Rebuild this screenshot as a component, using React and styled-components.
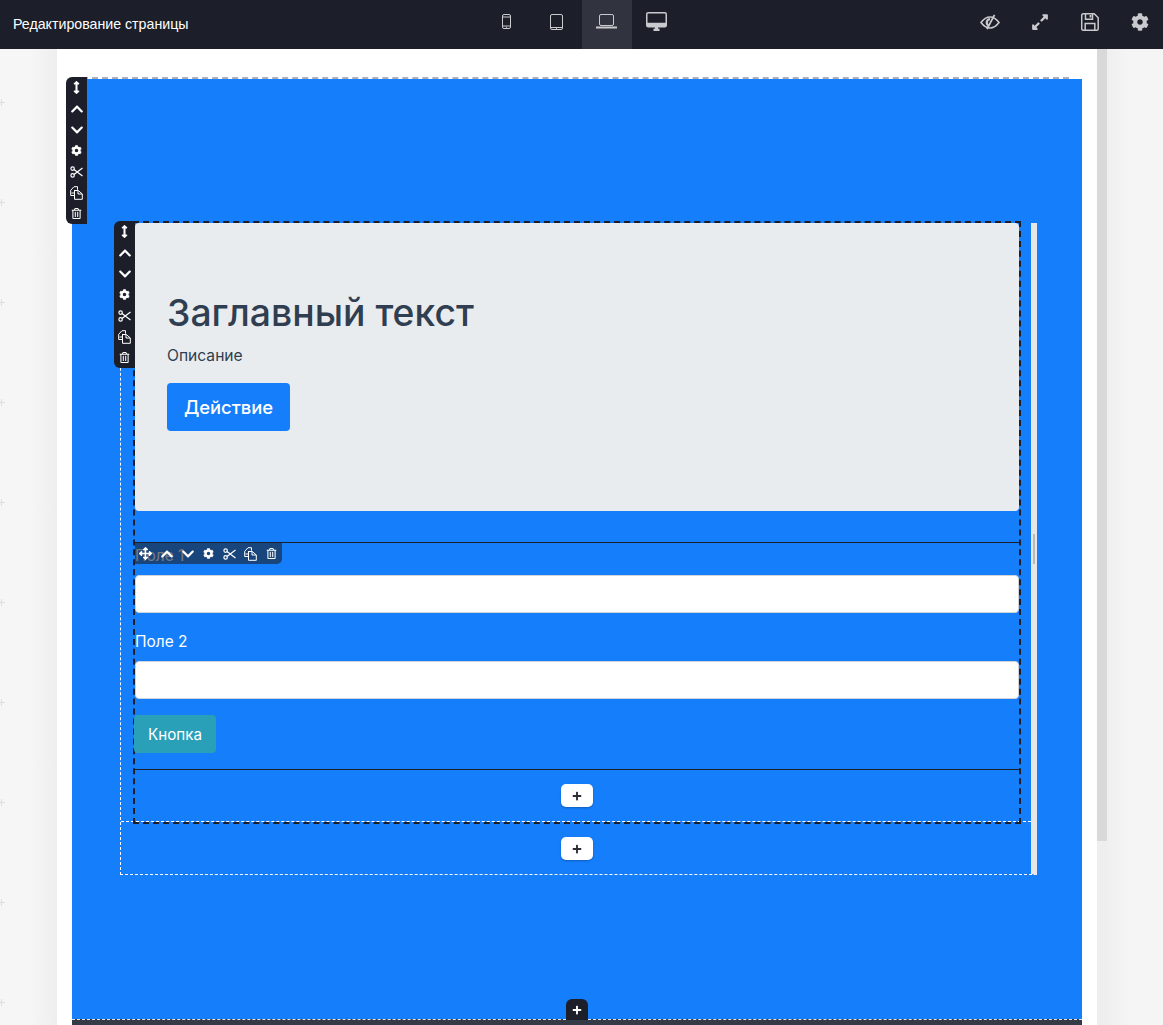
import React from 'react'
import styled, { createGlobalStyle } from 'styled-components'
import {
  FaArrowsAltV,
  FaArrowsAlt,
  FaChevronUp,
  FaChevronDown,
  FaCog,
  FaRegTrashAlt,
  FaExpandAlt,
  FaPlus
} from 'react-icons/fa'

const GlobalStyle = createGlobalStyle`
  * { box-sizing: border-box; }
  html, body { margin: 0; padding: 0; height: 100%; overflow: hidden; }
  body { font-family: Inter, "Liberation Sans", sans-serif; background: #f5f5f5; }
`

const PhoneIcon = () => (
  <svg width='9' height='15' viewBox='0 0 9 15' fill='none' stroke='currentColor'>
    <rect x='.5' y='.5' width='8' height='14' rx='1.5' />
    <path d='M1 3h7M1 12h7' />
    <circle cx='4.5' cy='13.2' r='.6' fill='currentColor' stroke='none' />
  </svg>
)

const TabletIcon = () => (
  <svg width='13' height='16' viewBox='0 0 13 16' fill='none' stroke='currentColor'>
    <rect x='.5' y='.5' width='12' height='15' rx='1.5' />
    <path d='M1 13.5h11' />
    <circle cx='6.5' cy='14.5' r='.6' fill='currentColor' stroke='none' />
  </svg>
)

const LaptopIcon = () => (
  <svg width='21' height='15' viewBox='0 0 21 15' fill='none' stroke='currentColor'>
    <rect x='3.5' y='.5' width='14' height='11' rx='1.5' />
    <path d='M.5 13.5h20' strokeWidth='2' strokeLinecap='round' />
  </svg>
)

const DesktopIcon = () => (
  <svg width='21' height='19' viewBox='0 0 21 19' fill='none' stroke='currentColor'>
    <rect x='.75' y='.75' width='19.5' height='14' rx='1.5' strokeWidth='1.5' />
    <path d='M1 12.5h19' strokeWidth='3.5' />
    <path d='M7.5 17.8h6' strokeWidth='2.4' />
    <path d='M9 15h3v2h-3z' fill='currentColor' stroke='none' />
  </svg>
)

const EyeSlashIcon = () => (
  <svg width='20' height='16' viewBox='0 0 20 16' fill='none' stroke='currentColor' strokeWidth='1.6'>
    <path d='M1 8.5C4 4.5 7 3 10 3s6 1.5 9 5.5c-3 4-6 5.500-9 5.500S4 12.500 1 8.500Z' />
    <path d='M10 5.200a3.300 3.300 0 0 0-1.500 6.200' strokeWidth='2.200' />
    <path d='M14.500 .8 7 15.200' strokeWidth='1.800' />
  </svg>
)

const SaveIcon = () => (
  <svg width='18' height='18' viewBox='0 0 18 18' fill='none' stroke='currentColor' strokeWidth='1.500'>
    <path d='M2.200 .8h11l4 4v10.900a1.500 1.500 0 0 1-1.500 1.500H2.200a1.500 1.500 0 0 1-1.500-1.500V2.300A1.500 1.500 0 0 1 2.200 .8Z' />
    <path d='M4.500 1v5.200h7V1M4.200 17v-6.500h9.600V17' />
    <path d='M9.500 2v2.500' strokeWidth='1.800' />
  </svg>
)

const ScissorsIcon = () => (
  <svg width='13' height='12' viewBox='0 0 13 12' fill='none' stroke='currentColor' strokeWidth='1.200'>
    <circle cx='2.600' cy='2.600' r='1.700' />
    <circle cx='2.600' cy='9.400' r='1.700' />
    <path d='M4 3.500 12.500 10M4 8.500 12.500 2' />
  </svg>
)

const CopyIcon = () => (
  <svg width='13' height='14' viewBox='0 0 13 14' fill='none' stroke='currentColor' strokeWidth='1'>
    <path d='M4.500 9.500H.7V4.300L4 .7h3.500v3' />
    <path d='M4.500 4v3h-3' />
    <path d='M4.500 4.500h3.800l4 3.500v5.300H4.500Z' />
    <path d='M8 4.500v3.500h4.300' />
  </svg>
)

const sideMarks = [0, 1, 2, 3, 4, 5, 6, 7, 8, 9]

const SectionTools = ({ move, className }) => (
  <ToolBar className={className} $horizontal={move}>
    <ToolButton>{move ? <FaArrowsAlt size={13} /> : <FaArrowsAltV size={13} />}</ToolButton>
    <ToolButton><FaChevronUp size={14} /></ToolButton>
    <ToolButton><FaChevronDown size={14} /></ToolButton>
    <ToolButton><FaCog size={11} /></ToolButton>
    <ToolButton><ScissorsIcon /></ToolButton>
    <ToolButton><CopyIcon /></ToolButton>
    <ToolButton><FaRegTrashAlt size={11} /></ToolButton>
  </ToolBar>
)

const App = () => (
  <Screen>
    <GlobalStyle />
    <TopBar>
      <PageTitle>Редактирование страницы</PageTitle>
      <DeviceGroup>
        <BarButton><PhoneIcon /></BarButton>
        <BarButton><TabletIcon /></BarButton>
        <BarButton $active><LaptopIcon /></BarButton>
        <BarButton><DesktopIcon /></BarButton>
      </DeviceGroup>
      <ActionGroup>
        <BarButton><EyeSlashIcon /></BarButton>
        <BarButton><FaExpandAlt size={18} /></BarButton>
        <BarButton><SaveIcon /></BarButton>
        <BarButton><FaCog size={18} /></BarButton>
      </ActionGroup>
    </TopBar>
    <Workspace>
      <LeftGutter>
        {sideMarks.map((mark) => <PlusMark key={mark} />)}
      </LeftGutter>
      <PageFrame>
        <BlueSection>
          <SectionToolbar />
          <OuterRow>
            <InnerRow>
              <ColumnToolbar />
              <Column>
                <Hero>
                  <HeroTitle>Заглавный текст</HeroTitle>
                  <HeroText>Описание</HeroText>
                  <HeroButton>Действие</HeroButton>
                </Hero>
                <FormBlock>
                  <FormToolbar move />
                  <FieldLabel>Поле 1</FieldLabel>
                  <FieldInput />
                  <FieldLabel>Поле 2</FieldLabel>
                  <FieldInput />
                  <SubmitButton>Кнопка</SubmitButton>
                </FormBlock>
                <AddRow $top={14}>
                  <AddButton><FaPlus size={10} /></AddButton>
                </AddRow>
              </Column>
            </InnerRow>
            <AddRow $top={15} $shift={2}>
              <AddButton><FaPlus size={10} /></AddButton>
            </AddRow>
            <ResizeHandle />
          </OuterRow>
          <AddTab><FaPlus size={10} /></AddTab>
        </BlueSection>
        <DarkFooter />
      </PageFrame>
      <Scrollbar />
      <RightGutter />
    </Workspace>
  </Screen>
)

export default App

const Screen = styled.div`
  width: 1163px;
  height: 1025px;
  overflow: hidden;
  display: flex;
  flex-direction: column;
`

const TopBar = styled.header`
  height: 49px;
  flex: none;
  display: grid;
  grid-template-columns: 482px 200px 1fr;
  background: #1c1f2a;
  color: #c9cacd;
`

const PageTitle = styled.div`
  align-self: center;
  padding: 0 0 1px 13px;
  font-family: "Liberation Sans", Arial, sans-serif;
  font-size: 14.2px;
  color: #fff;
  white-space: nowrap;
`

const BarButton = styled.div`
  width: 50px;
  height: 49px;
  display: flex;
  align-items: center;
  justify-content: center;
  padding-bottom: 6px;
  background: ${(p) => (p.$active ? '#31343f' : 'transparent')};
`

const DeviceGroup = styled.nav`
  display: flex;
  svg { margin-left: -1px; }
`

const ActionGroup = styled.nav`
  display: flex;
  justify-content: flex-end;
  margin-right: -2px;
  ${BarButton} { padding-bottom: 5px; }
`

const Workspace = styled.div`
  flex: 1;
  display: flex;
  min-height: 0;
`

const LeftGutter = styled.aside`
  width: 57px;
  flex: none;
  padding-top: 50px;
  display: flex;
  flex-direction: column;
  gap: 93px;
  background: linear-gradient(to right, #f6f6f6 55%, #eeeeee);
`

const PlusMark = styled.span`
  display: block;
  width: 7px;
  height: 7px;
  flex: none;
  margin-left: -2px;
  background:
    linear-gradient(#dedede, #dedede) center / 7px 1px no-repeat,
    linear-gradient(#dedede, #dedede) center / 1px 7px no-repeat;
`

const PageFrame = styled.main`
  width: 1040px;
  flex: none;
  padding: 30px 15px 0;
  background: #fff;
`

const BlueSection = styled.section`
  position: relative;
  height: 940px;
  padding-top: 144px;
  background: #157efb;
  &::before {
    content: '';
    position: absolute;
    top: -2px;
    left: 0;
    right: 13px;
    border-top: 2px dashed #aaaebb;
  }
`

const ToolBar = styled.div`
  position: absolute;
  z-index: 3;
  display: flex;
  flex-direction: ${(p) => (p.$horizontal ? 'row' : 'column')};
  color: #fff;
  background: #1c1f2a;
`

const ToolButton = styled.span`
  width: 21px;
  height: 21px;
  flex: none;
  display: flex;
  align-items: center;
  justify-content: center;
`

const SectionToolbar = styled(SectionTools)`
  top: -2px;
  left: -6px;
  border-radius: 6px 0 0 6px;
`

const ColumnToolbar = styled(SectionTools)`
  top: -2px;
  left: -7px;
  border-radius: 6px 0 0 6px;
`

const FormToolbar = styled(SectionTools)`
  top: 0;
  left: 0;
  border-bottom-right-radius: 5px;
  background: rgba(28, 31, 42, 0.6);
`

const OuterRow = styled.div`
  position: relative;
  width: 917px;
  height: 652px;
  margin-left: 48px;
  border-left: 1px dashed #fff;
  border-bottom: 1px dashed #fff;
  border-right: 6px solid #e6e6e6;
`

const InnerRow = styled.div`
  position: relative;
  padding: 0 12px 0 14px;
  border-bottom: 1px dashed #fff;
`

const Column = styled.div`
  position: relative;
  height: 599px;
  margin-bottom: -1px;
  outline: 2px dashed #1c1f2a;
`

const ResizeHandle = styled.span`
  position: absolute;
  top: 311px;
  right: -4px;
  width: 2px;
  height: 30px;
  background: #b9b9b9;
`

const Hero = styled.div`
  height: 288px;
  margin-bottom: 31px;
  padding: 64px 32px 0;
  border-radius: 4px;
  background: #e9ecef;
  color: #2f3e50;
`

const HeroTitle = styled.h1`
  margin: 0 0 5px;
  font-size: 37.3px;
  font-weight: 500;
  line-height: 52px;
`

const HeroText = styled.p`
  margin: 0 0 15px;
  font-size: 15.6px;
  line-height: 24px;
`

const HeroButton = styled.button`
  display: block;
  width: 123px;
  height: 48px;
  padding: 0;
  border: 0;
  border-radius: 4px;
  background: #157efb;
  color: #fff;
  font-family: inherit;
  font-size: 18.4px;
  font-weight: 500;
`

const FormBlock = styled.form`
  position: relative;
  display: flex;
  flex-direction: column;
  height: 228px;
  padding-bottom: 16px;
  border-top: 1px solid #1c1f2a;
  border-bottom: 1px solid #1c1f2a;
`

const FieldLabel = styled.label`
  margin-bottom: 7px;
  padding-top: 1px;
  font-size: 15.5px;
  line-height: 24px;
  color: #fff;
`

const FieldInput = styled.input`
  height: 38px;
  flex: none;
  margin-bottom: 16px;
  border: 1px solid #ced4da;
  border-radius: 4px;
  background: #fff;
`

const SubmitButton = styled.button`
  align-self: flex-start;
  width: 82px;
  height: 38px;
  margin-left: -1px;
  padding: 0;
  border: 0;
  border-radius: 4px;
  background: #2a9fb8;
  color: #fff;
  font-family: inherit;
  font-size: 15.2px;
`

const AddRow = styled.div`
  display: flex;
  justify-content: center;
  padding-top: ${(p) => p.$top}px;
  padding-left: ${(p) => p.$shift || 0}px;
`

const AddButton = styled.span`
  width: 32px;
  height: 23px;
  display: flex;
  align-items: center;
  justify-content: center;
  border-radius: 5px;
  background: #fff;
  color: #2b2d33;
  box-shadow: 0 1px 2px rgba(0, 0, 0, 0.25);
`

const AddTab = styled.span`
  position: absolute;
  left: 494px;
  bottom: -1px;
  width: 22px;
  height: 21px;
  display: flex;
  align-items: center;
  justify-content: center;
  border-radius: 6px 6px 0 0;
  background: #1c1f2a;
  color: #fff;
`

const DarkFooter = styled.div`
  height: 6px;
  border-top: 1px dashed #e6e6e6;
  background: #343a46;
`

const Scrollbar = styled.div`
  width: 10px;
  flex: none;
  background: linear-gradient(to bottom, #d9d9d9 792px, #eeeeee 792px);
`

const RightGutter = styled.aside`
  flex: 1;
  background: linear-gradient(to right, #efefef, #f5f5f5 40%);
`
